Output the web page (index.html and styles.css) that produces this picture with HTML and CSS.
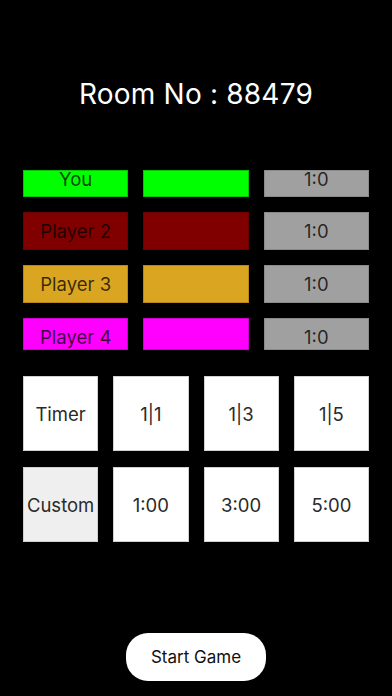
FILE: index.html
```html
<!DOCTYPE html>
<html lang="en">
<head>
<meta charset="utf-8">
<meta name="viewport" content="width=device-width, initial-scale=1">
<title>Room</title>
<link rel="stylesheet" href="styles.css">
</head>
<body>
<main class="screen">
  <h1 class="title">Room No : 88479</h1>

  <section class="players">
    <div class="cell green r1">You</div>
    <div class="cell green r1"></div>
    <div class="cell gray r1">1:0</div>

    <div class="cell maroon r2">Player 2</div>
    <div class="cell maroon r2"></div>
    <div class="cell gray r2">1:0</div>

    <div class="cell gold r2">Player 3</div>
    <div class="cell gold r2"></div>
    <div class="cell gray r2">1:0</div>

    <div class="cell magenta r4">Player 4</div>
    <div class="cell magenta r4"></div>
    <div class="cell gray r4">1:0</div>
  </section>

  <section class="timers">
    <div class="tile">Timer</div>
    <div class="tile">1|1</div>
    <div class="tile">1|3</div>
    <div class="tile">1|5</div>
    <div class="tile tile-custom">Custom</div>
    <div class="tile">1:00</div>
    <div class="tile">3:00</div>
    <div class="tile">5:00</div>
  </section>

  <div class="actions">
    <button class="start" type="button">Start Game</button>
  </div>
</main>
</body>
</html>
```

FILE: styles.css
```css
html, body {
  margin: 0;
  padding: 0;
  background: #000;
}

body {
  font-family: Inter, "Noto Sans", "Liberation Sans", sans-serif;
  width: 392px;
  height: 696px;
  overflow: hidden;
}

.screen {
  display: flex;
  flex-direction: column;
}

.title {
  margin: 78px 0 0;
  font-size: 28px;
  font-weight: 400;
  line-height: 32px;
  color: #fff;
  text-align: center;
  letter-spacing: 0.2px;
}

.players {
  margin: 60px 0 0 23px;
  width: 346px;
  display: grid;
  grid-template-columns: repeat(3, 1fr);
  column-gap: 15px;
  row-gap: 15px;
}

.cell {
  box-sizing: border-box;
  border: 1px solid rgba(0, 0, 0, 0.25);
  font-size: 18.5px;
  color: rgba(0, 0, 0, 0.75);
  text-align: center;
  overflow: hidden;
}

.r1 {
  height: 27px;
  line-height: 16px;
  overflow: visible;
}

.r2 {
  height: 38px;
  line-height: 36px;
}

.r4 {
  height: 32px;
  line-height: 36px;
}

.green { background: #00ff00; border-color: #00c800; }
.maroon { background: #800000; border-color: #6a0000; }
.gold { background: #daa520; border-color: #b8891a; }
.magenta { background: #ff00ff; border-color: #d000d0; }
.gray { background: #a0a0a0; border-color: #8a8a8a; color: rgba(0, 0, 0, 0.78); }

.timers {
  margin: 26px 0 0 23px;
  width: 346px;
  display: grid;
  grid-template-columns: repeat(4, 1fr);
  column-gap: 15px;
  row-gap: 16px;
}

.tile {
  box-sizing: border-box;
  height: 75px;
  background: #fff;
  border: 1px solid #d0d0d0;
  display: flex;
  align-items: center;
  justify-content: center;
  font-size: 18.5px;
  color: #2a2a2a;
}

.tile-custom {
  background: #efefef;
}

.actions {
  margin-top: 91px;
  display: flex;
  justify-content: center;
}

.start {
  width: 140px;
  height: 48px;
  border: none;
  border-radius: 22px;
  background: #fff;
  font-family: Inter, "Noto Sans", "Liberation Sans", sans-serif;
  font-size: 17px;
  color: #111;
  padding: 0;
}
```
